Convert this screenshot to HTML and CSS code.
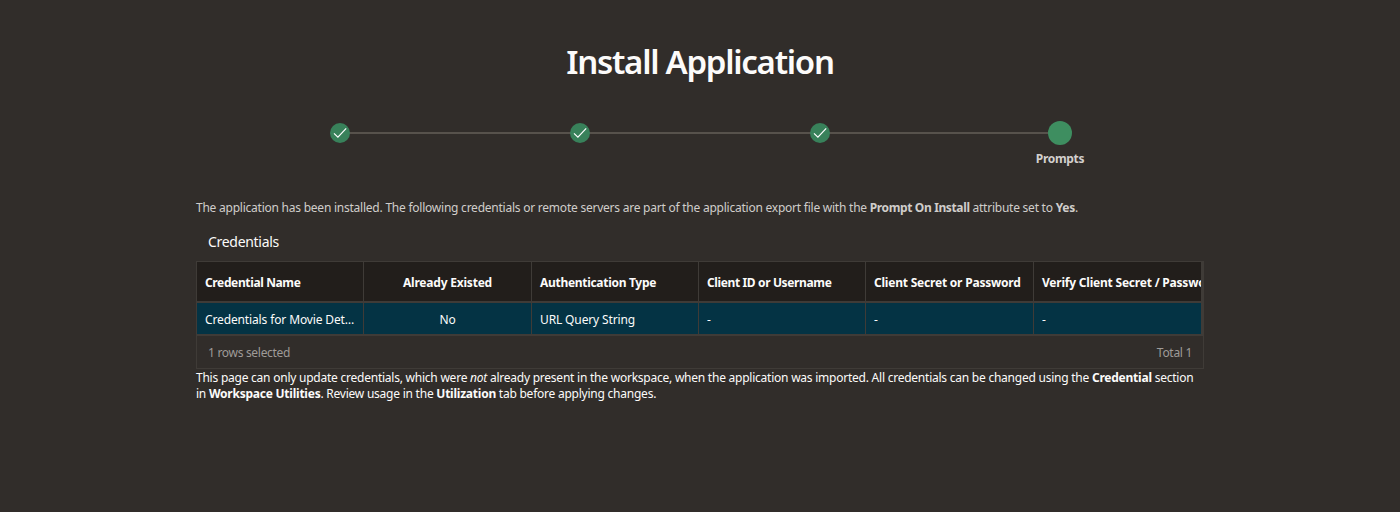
FILE: index.html
```html
<!DOCTYPE html>
<html lang="en">
<head>
<meta charset="utf-8">
<title>Install Application</title>
<link rel="stylesheet" href="styles.css">
</head>
<body>
<main class="page">
  <h1 class="title">Install Application</h1>
  <ol class="wizard">
    <li class="step"><span class="marker"><svg class="check" viewBox="0 0 20 20"><path d="M4 10.4 7.9 14.2 16.2 5.3"/></svg></span></li>
    <li class="step"><span class="marker"><svg class="check" viewBox="0 0 20 20"><path d="M4 10.4 7.9 14.2 16.2 5.3"/></svg></span></li>
    <li class="step"><span class="marker"><svg class="check" viewBox="0 0 20 20"><path d="M4 10.4 7.9 14.2 16.2 5.3"/></svg></span></li>
    <li class="step current"><span class="marker"></span><span class="step-label">Prompts</span></li>
  </ol>
  <p class="intro">The application has been installed. The following credentials or remote servers are part of the application export file with the <b class="tight">Prompt On Install</b> attribute set to <b>Yes</b>.</p>
  <section class="region">
    <h2 class="region-title">Credentials</h2>
    <div class="grid">
      <div class="grid-row head">
        <div class="cell tight">Credential Name</div>
        <div class="cell center wide">Already Existed</div>
        <div class="cell">Authentication Type</div>
        <div class="cell tight">Client ID or Username</div>
        <div class="cell wide">Client Secret or Password</div>
        <div class="cell wide">Verify Client Secret / Password</div>
      </div>
      <div class="grid-row selected">
        <div class="cell">Credentials for Movie Det…</div>
        <div class="cell center">No</div>
        <div class="cell">URL Query String</div>
        <div class="cell">-</div>
        <div class="cell">-</div>
        <div class="cell">-</div>
      </div>
      <div class="grid-footer"><span>1 rows selected</span><span>Total 1</span></div>
    </div>
  </section>
  <p class="note">This page can only update credentials, which were <i>not</i> already present in the workspace, when the application was imported. All credentials can be changed using the <b>Credential</b> section<br>in <b>Workspace Utilities</b>. Review usage in the <b>Utilization</b> tab before applying changes.</p>
</main>
</body>
</html>
```
FILE: styles.css
```css
* { box-sizing: border-box; }
body {
  margin: 0;
  height: 512px;
  overflow: hidden;
  background: #312d2a;
  color: #fcfbfa;
  font: 12px/16px "Noto Sans", "Open Sans", sans-serif;
}
.page { width: 1008px; margin: 0 auto; padding-top: 40px; }
.title {
  margin: 0;
  height: 44px;
  font-size: 33px;
  line-height: 44px;
  font-weight: 600;
  text-align: center;
  letter-spacing: -1.28px;
  white-space: nowrap;
}
.wizard {
  display: grid;
  grid-template-columns: repeat(4, 240px);
  width: 960px;
  height: 49px;
  margin: 36px auto 0;
  padding: 0;
  list-style: none;
}
.step {
  display: flex;
  flex-direction: column;
  align-items: center;
  padding-top: 3px;
  background: linear-gradient(#57524c, #57524c) 120px 12px / 240px 2px no-repeat;
}
.step + .step { background-position: 0 12px; }
.step.current { padding-top: 1px; background-size: 120px 2px; }
.marker { width: 20px; height: 20px; border-radius: 50%; background: #38815a; }
.current .marker { width: 24px; height: 24px; background: #3e8e60; }
.check { display: block; width: 20px; height: 20px; fill: none; stroke: #fff; stroke-width: 1.15; }
.step-label { margin-top: 6px; font-weight: 700; color: #d3d0ce; letter-spacing: -.3px; }
.intro { margin: 31px 0 0; color: #d0cdca; letter-spacing: -.235px; white-space: nowrap; }
.region-title {
  margin: 16px 0 0 12px;
  height: 29px;
  font-size: 14px;
  line-height: 20px;
  font-weight: 400;
  letter-spacing: -.3px;
}
.grid { width: 1008px; height: 108px; border: 1px solid #3f3b37; }
.grid-row {
  display: grid;
  grid-template-columns: 167px 168px 167px 167px 168px 167px;
  border-right: 2px solid #3f3b37;
  border-bottom: 2px solid #3f3b37;
}
.cell {
  display: flex;
  align-items: center;
  padding: 2px 0 0 8px;
  overflow: hidden;
  white-space: nowrap;
  border-right: 1px solid #3f3b37;
}
.cell:last-child { border-right: 0; }
.center { justify-content: center; padding-left: 0; }
.head { height: 41px; background: #221e1b; font-weight: 700; letter-spacing: -.3px; }
.selected { height: 33px; background: #043344; letter-spacing: -.13px; }
.tight { letter-spacing: -.37px; }
.wide { letter-spacing: -.21px; }
.grid-footer {
  display: flex;
  justify-content: space-between;
  align-items: center;
  height: 32px;
  padding: 2px 11px 0;
  color: #9f9b98;
  letter-spacing: -.3px;
}
.note { margin: 1px 0 0; white-space: nowrap; letter-spacing: -.235px; }
```
